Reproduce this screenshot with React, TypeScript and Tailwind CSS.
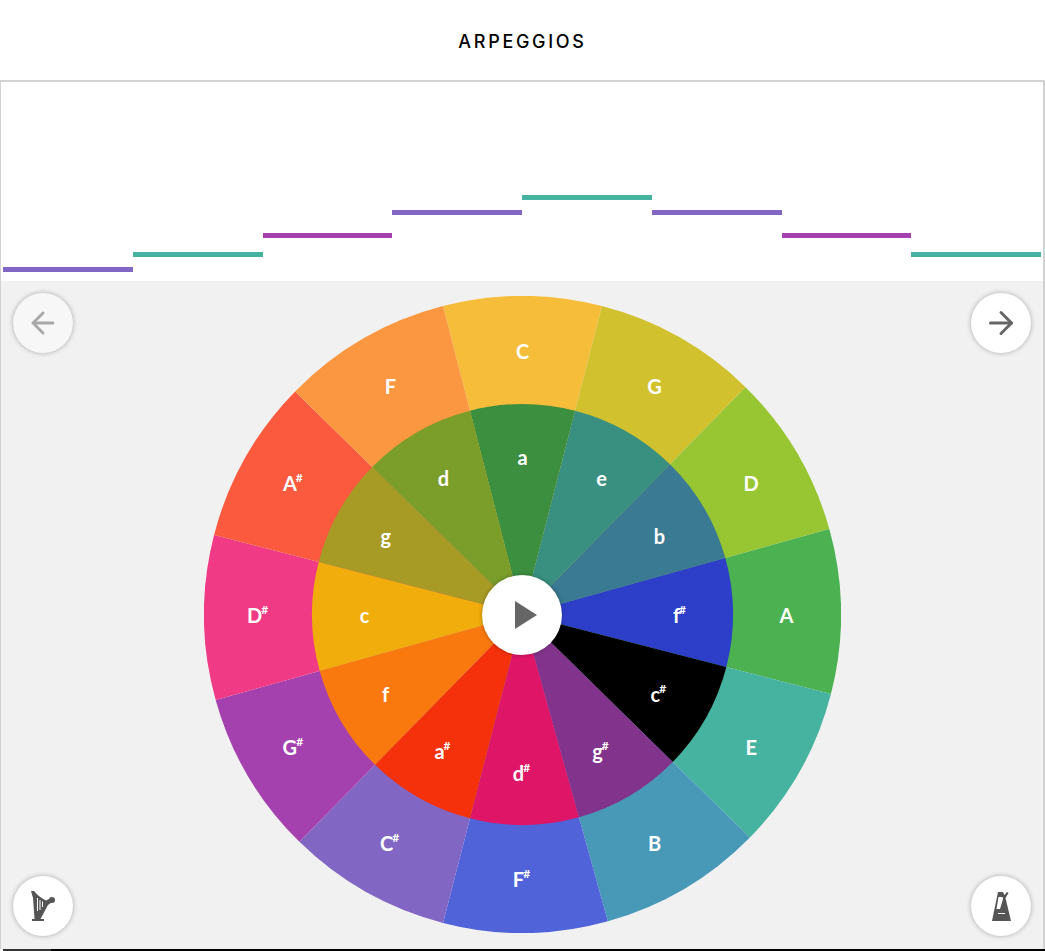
import React from 'react';
import { ArrowLeft, ArrowRight } from 'lucide-react';

const CX = 318.5;
const CY = 318.5;
const OUTER = 318.5;
const INNER = 210.5;

// going clockwise from the top of the wheel
const outerKeys = [
  { note: 'C', color: '#f6bd3a' },
  { note: 'G', color: '#d2c12e' },
  { note: 'D', color: '#98c633' },
  { note: 'A', color: '#4cb151' },
  { note: 'E', color: '#46b3a0' },
  { note: 'B', color: '#4799b7' },
  { note: 'F', sharp: true, color: '#5063d9' },
  { note: 'C', sharp: true, color: '#8166c4' },
  { note: 'G', sharp: true, color: '#a441ae' },
  { note: 'D', sharp: true, color: '#f03a85' },
  { note: 'A', sharp: true, color: '#fb5a3e' },
  { note: 'F', color: '#fa9740' },
];

const innerKeys = [
  { note: 'a', color: '#3d8f40' },
  { note: 'e', color: '#398f80' },
  { note: 'b', color: '#3a7a92' },
  { note: 'f', sharp: true, color: '#2d3fc8' },
  { note: 'c', sharp: true, color: '#000000' },
  { note: 'g', sharp: true, color: '#82338b' },
  { note: 'd', sharp: true, color: '#df1568' },
  { note: 'a', sharp: true, color: '#f5310b' },
  { note: 'f', color: '#f9790e' },
  { note: 'c', color: '#f1ad0b' },
  { note: 'g', color: '#a89b25' },
  { note: 'd', color: '#7a9e29' },
];

const notes = [
  { color: 'bg-[#8166c4]', top: 'mt-[185px]' },
  { color: 'bg-[#46b3a0]', top: 'mt-[170px]' },
  { color: 'bg-[#a441ae]', top: 'mt-[151px]' },
  { color: 'bg-[#8166c4]', top: 'mt-[128px]' },
  { color: 'bg-[#46b3a0]', top: 'mt-[113px]' },
  { color: 'bg-[#8166c4]', top: 'mt-[128px]' },
  { color: 'bg-[#a441ae]', top: 'mt-[151px]' },
  { color: 'bg-[#46b3a0]', top: 'mt-[170px]' },
];

const polar = (r: number, deg: number) => {
  const a = ((deg - 90) * Math.PI) / 180;
  return [CX + r * Math.cos(a), CY + r * Math.sin(a)];
};

// the wheel sits half a degree off, so the first wedge is a bit narrow and the last a bit wide
const wedge = (r: number, i: number) => {
  const start = i === 0 ? -14.45 : i * 30 - 15.55;
  const end = i === 11 ? 345.55 : i * 30 + 14.45;
  const [x1, y1] = polar(r, start);
  const [x2, y2] = polar(r, end);
  return `M${CX} ${CY}L${x1} ${y1}A${r} ${r} 0 0 1 ${x2} ${y2}Z`;
};

const Label = ({ note, sharp, r, i }: { note: string; sharp?: boolean; r: number; i: number }) => {
  const [x, y] = polar(r, i * 30);
  return (
    <text x={sharp ? x - 1 : x} y={y + 8} textAnchor="middle" fill="#fff" fontSize={20} fontWeight={700} className="font-['Lato',sans-serif]">
      {note}
      {sharp && <tspan fontSize={12} dy={-9} dx={-1}>#</tspan>}
    </text>
  );
};

const RoundButton = ({ children, faded, className }: { children: React.ReactNode; faded?: boolean; className: string }) => (
  <button
    className={`absolute w-[60px] h-[60px] rounded-full flex items-center justify-center shadow-[0_0_5px_rgba(0,0,0,0.3)] ${faded ? 'bg-[#f7f7f7]' : 'bg-white'} ${className}`}
  >
    {children}
  </button>
);

const HarpIcon = () => (
  <svg width="24" height="30" viewBox="0 0 24 30" fill="#555">
    <path d="M0 0 H3 C6 4 10 7 15 9.5 L19 7.5 L21 11 L17 14 L9.5 28 H13 V30 H1 V28 H3.5 L2 7 Z" />
    <circle cx="21" cy="9" r="3" />
    <path d="M6 7 H7 V20 H6 Z M8.5 9 H9.5 V19 H8.5 Z M11 10.5 H12 V16 H11 Z" fill="#fff" />
  </svg>
);

const MetronomeIcon = () => (
  <svg width="19" height="29" viewBox="0 0 19 29" fill="#555">
    <path d="M6 0 L11 0 L12.5 3 L15 0 L16.5 1 L13.5 6 L19 29 L0 29 Z" />
    <path d="M6.5 5 L10.5 5 L11 7 L8 17 L4.5 17 Z" fill="#fff" />
    <path d="M6 21 L13 21 L13 22 L6 22 Z" fill="#fff" />
  </svg>
);

export default function App() {
  return (
    <div className="w-[1045px] h-[951px] flex flex-col bg-white overflow-hidden font-['Lato',sans-serif]">
      <header className="h-[80px] shrink-0 flex items-center justify-center pt-[3px]">
        <h1 className="text-[18px] font-medium tracking-[0.15em] text-black font-['Inter',sans-serif]">ARPEGGIOS</h1>
      </header>

      <main className="flex-1 flex flex-col border-t-2 border-l border-r-2 border-[#d2d2d2] border-b-0 min-h-0">
        <section className="h-[199px] shrink-0 flex px-[2px]">
          {notes.map((n, i) => (
            <div key={i} className="flex-1">
              <div className={`h-[5px] ${n.color} ${n.top}`} />
            </div>
          ))}
        </section>

        <section className="relative flex-1 bg-[#f1f1f1] flex justify-center pt-[15px]">
          <div className="relative w-[637px] h-[637px] shrink-0">
            <svg width="637" height="637" viewBox="0 0 637 637">
              {outerKeys.map((k, i) => (
                <path key={i} d={wedge(OUTER, i)} fill={k.color} />
              ))}
              {innerKeys.map((k, i) => (
                <path key={i} d={wedge(INNER, i)} fill={k.color} />
              ))}
              {outerKeys.map((k, i) => (
                <Label key={i} note={k.note} sharp={k.sharp} r={264} i={i} />
              ))}
              {innerKeys.map((k, i) => (
                <Label key={i} note={k.note} sharp={k.sharp} r={158} i={i} />
              ))}
            </svg>
            <button className="absolute left-[278.5px] top-[278.5px] w-[80px] h-[80px] rounded-full bg-white flex items-center justify-center shadow-[0_0_4px_rgba(0,0,0,0.3)]">
              <svg width="22" height="28" viewBox="0 0 22 28" className="ml-[7px]">
                <path d="M0 0 L22 14 L0 28 Z" fill="#666" />
              </svg>
            </button>
          </div>

          <RoundButton faded className="left-[12px] top-[12px]">
            <ArrowLeft size={34} strokeWidth={2} className="text-[#a8a8a8]" />
          </RoundButton>
          <RoundButton className="right-[12px] top-[12px]">
            <ArrowRight size={36} strokeWidth={2} className="text-[#666]" />
          </RoundButton>
          <RoundButton className="left-[12px] bottom-[13px]">
            <HarpIcon />
          </RoundButton>
          <RoundButton className="right-[12px] bottom-[13px]">
            <MetronomeIcon />
          </RoundButton>
        </section>
      </main>

      <div className="h-[2px] shrink-0 flex">
        <div className="w-[3px] bg-white" />
        <div className="w-[48px] bg-[#333]" />
        <div className="flex-1 bg-black" />
      </div>
    </div>
  );
}
